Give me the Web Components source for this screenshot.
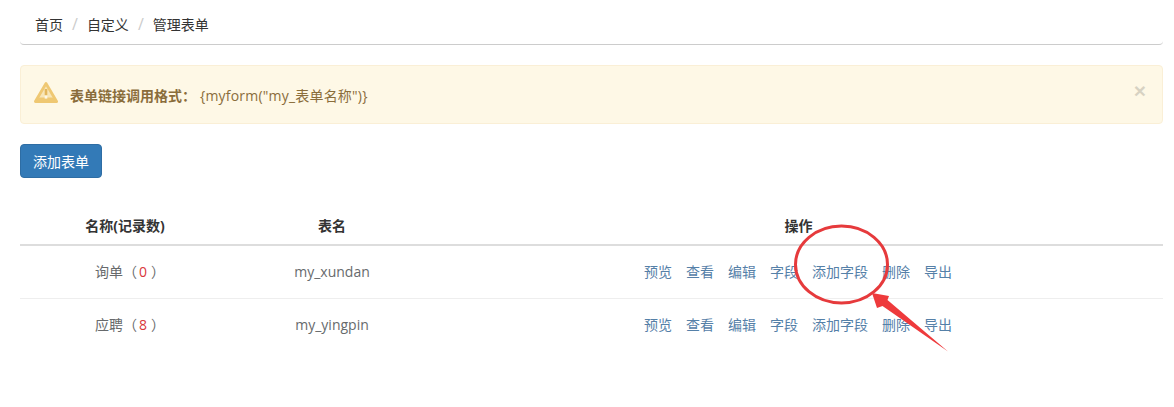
<!DOCTYPE html>
<html lang="zh">
<head>
<meta charset="utf-8">
<title>管理表单</title>
<style>
  html, body { margin: 0; background: #fff; }
  body {
    font-family: "Open Sans", "Noto Sans CJK SC", sans-serif;
    font-size: 14px;
    color: #676a6c;
  }
</style>
</head>
<body>
<admin-page>
  <crumb-bar>
    <crumb-item>首页</crumb-item>
    <crumb-item>自定义</crumb-item>
    <crumb-item>管理表单</crumb-item>
  </crumb-bar>
  <warn-alert label="表单链接调用格式：">{myform("my_表单名称")}</warn-alert>
  <add-button>添加表单</add-button>
  <form-table>
    <form-row name="询单" count="0" table="my_xundan"></form-row>
    <form-row name="应聘" count="8" table="my_yingpin"></form-row>
  </form-table>
  <red-note></red-note>
</admin-page>

<script>
class AdminPage extends HTMLElement {
  constructor() {
    super();
    this.attachShadow({ mode: 'open' });
    this.shadowRoot.innerHTML = `
      <style>
        :host { display: block; position: relative; height: 407px; padding: 0 11px 0 20px; overflow: hidden; }
      </style>
      <slot></slot>
    `;
  }
}

class CrumbBar extends HTMLElement {
  constructor() {
    super();
    this.attachShadow({ mode: 'open' });
    this.shadowRoot.innerHTML = `
      <style>
        :host {
          display: flex;
          align-items: center;
          height: 41px;
          padding: 3px 15px 0;
          border-bottom: 1px solid #ccc;
          border-radius: 0 0 4px 4px;
          color: #333;
        }
      </style>
      <slot></slot>
    `;
  }
}

class CrumbItem extends HTMLElement {
  constructor() {
    super();
    this.attachShadow({ mode: 'open' });
    this.shadowRoot.innerHTML = `
      <style>
        :host { display: inline-flex; align-items: center; }
        .sep { display: none; color: #ccc; padding: 0 9px; font-size: 16px; line-height: 1; }
        :host(:not(:first-child)) .sep { display: inline; }
      </style>
      <span class="sep">/</span><slot></slot>
    `;
  }
}

class WarnAlert extends HTMLElement {
  constructor() {
    super();
    this.attachShadow({ mode: 'open' });
    const label = this.getAttribute('label') || '';
    this.shadowRoot.innerHTML = `
      <style>
        :host {
          display: flex;
          align-items: center;
          box-sizing: border-box;
          height: 59px;
          margin-top: 20px;
          padding: 0 15px 0 13px;
          background: #fef8e6;
          border: 1px solid #faefd6;
          border-radius: 4px;
          color: #8a6d3b;
          position: relative;
        }
        svg { width: 24px; height: 21px; margin-right: 12px; margin-top: -5px; flex: none; }
        b { font-weight: 700; margin-right: 4px; }
        .value { letter-spacing: .2px; }
        .close {
          position: absolute;
          right: 16px;
          top: 14px;
          font: 700 21px/1 "Liberation Sans", sans-serif;
          color: #000;
          opacity: .15;
        }
      </style>
      <svg viewBox="0 0 24 21" aria-hidden="true">
        <path d="M12 1.5 L22.6 19.5 H1.4 Z" fill="#f8e6b8" stroke="#efc873" stroke-width="2.8" stroke-linejoin="round"/>
        <path d="M4.5 15.5 H19.5 L21.5 19.5 H2.5 Z" fill="#efc873"/>
        <rect x="10.7" y="7" width="2.6" height="6" fill="#e3b65c"/>
        <rect x="10.7" y="14" width="2.6" height="2.6" fill="#fef8e6"/>
      </svg>
      <b>${label}</b><span class="value"><slot></slot></span>
      <span class="close">×</span>
    `;
  }
}

class AddButton extends HTMLElement {
  constructor() {
    super();
    this.attachShadow({ mode: 'open' });
    this.shadowRoot.innerHTML = `
      <style>
        :host {
          display: flex;
          align-items: center;
          justify-content: center;
          box-sizing: border-box;
          width: 82px;
          height: 34px;
          margin-top: 20px;
          background: #337ab7;
          border: 1px solid #2e6da4;
          border-radius: 4px;
          color: #fff;
        }
      </style>
      <slot></slot>
    `;
  }
}

class FormTable extends HTMLElement {
  constructor() {
    super();
    this.attachShadow({ mode: 'open' });
    this.shadowRoot.innerHTML = `
      <style>
        :host { display: block; margin-top: 30px; }
        .head {
          display: grid;
          grid-template-columns: 210px 204px 1fr;
          align-items: center;
          height: 33px;
          padding-bottom: 3px;
          border-bottom: 2px solid #ddd;
          text-align: center;
          font-weight: 700;
          color: #333;
        }
      </style>
      <div class="head"><span>名称(记录数)</span><span>表名</span><span>操作</span></div>
      <slot></slot>
    `;
  }
}

class FormRow extends HTMLElement {
  constructor() {
    super();
    this.attachShadow({ mode: 'open' });
    const name = this.getAttribute('name');
    const count = this.getAttribute('count');
    const table = this.getAttribute('table');
    const actions = ['预览', '查看', '编辑', '字段', '添加字段', '删除', '导出'];
    this.shadowRoot.innerHTML = `
      <style>
        :host {
          display: grid;
          grid-template-columns: 210px 204px 1fr;
          align-items: center;
          height: 51px;
          padding-bottom: 1px;
          border-bottom: 1px solid #eee;
          text-align: center;
        }
        :host(:last-of-type) { border-bottom: 0; }
        .name { padding: 0 0 2px 10px; }
        .count { color: #d9363a; padding: 0 4px 0 2px; }
        .actions { display: flex; justify-content: center; gap: 14px; padding: 0 1px 2px 0; color: #5580a8; }
      </style>
      <span class="name">${name}（<span class="count">${count}</span>）</span>
      <span>${table}</span>
      <span class="actions">${actions.map(a => `<span>${a}</span>`).join('')}</span>
    `;
  }
}

// 红色圈和箭头，盖在表格上面
class RedNote extends HTMLElement {
  constructor() {
    super();
    this.attachShadow({ mode: 'open' });
    this.shadowRoot.innerHTML = `
      <style>
        :host { position: absolute; left: 0; top: 0; width: 1174px; height: 407px; pointer-events: none; }
        svg { display: block; }
      </style>
      <svg width="1174" height="407" viewBox="0 0 1174 407" aria-hidden="true">
        <ellipse cx="841.5" cy="264.5" rx="46" ry="38.5" fill="none" stroke="#e63a3c" stroke-width="3"/>
        <path d="M872 293 L889 296 L887.5 300 L948 351.5 L882.5 306 L877 308 Z" fill="#ee3a3c"/>
      </svg>
    `;
  }
}

customElements.define('admin-page', AdminPage);
customElements.define('crumb-bar', CrumbBar);
customElements.define('crumb-item', CrumbItem);
customElements.define('warn-alert', WarnAlert);
customElements.define('add-button', AddButton);
customElements.define('form-table', FormTable);
customElements.define('form-row', FormRow);
customElements.define('red-note', RedNote);
</script>
</body>
</html>
